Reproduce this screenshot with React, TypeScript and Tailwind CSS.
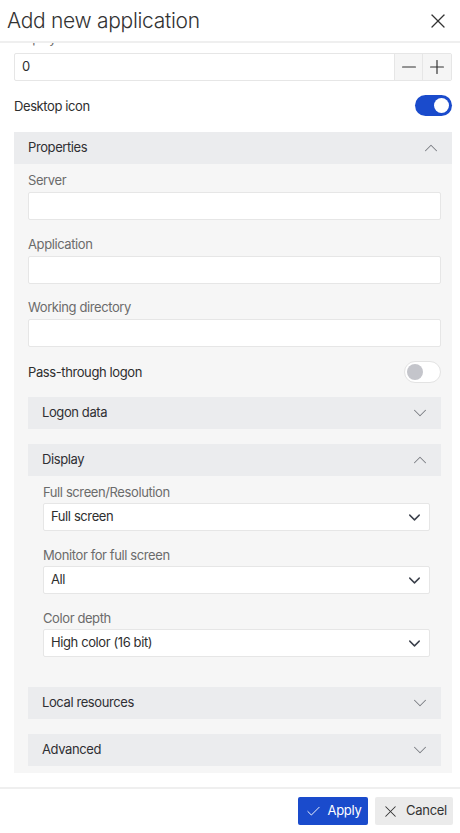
import { useState } from "react"
import { Check, ChevronDown, ChevronUp, Minus, Plus, X } from "lucide-react"

function Toggle({ on }: { on: boolean }) {
  return on ? (
    <div className="w-[37px] h-[21px] rounded-full bg-[#1a4bcc] flex items-center justify-end pr-[3px]">
      <div className="w-[15px] h-[15px] rounded-full bg-white" />
    </div>
  ) : (
    <div className="w-[37px] h-[22px] rounded-full bg-white border border-[#e3e3e3] flex items-center pl-[2px]">
      <div className="w-[16px] h-[16px] rounded-full bg-[#c4c5cb]" />
    </div>
  )
}

function TextField({ label, className = "" }: { label: string; className?: string }) {
  return (
    <div className={className}>
      <div className="h-4 leading-4 text-[13px] tracking-[-0.4px] text-[#6b6b6b]">{label}</div>
      <div className="mt-1 h-[28px] bg-white border border-[#e6e6e6] rounded-[2px]" />
    </div>
  )
}

function SelectField({ label, value, className = "" }: { label: string; value: string; className?: string }) {
  return (
    <div className={className}>
      <div className="h-4 leading-4 text-[13px] tracking-[-0.4px] text-[#6b6b6b]">{label}</div>
      <div className="mt-[3px] h-[28px] bg-white border border-[#e6e6e6] rounded-[2px] flex items-center pl-[7px] pr-[5px]">
        <span className="flex-1 text-[13px] tracking-[-0.4px] text-[#2e2e2e]">{value}</span>
        <ChevronDown className="w-[19px] h-[19px] text-[#3a3f4a]" strokeWidth={1.8} />
      </div>
    </div>
  )
}

function SectionHeader({ title, open }: { title: string; open?: boolean }) {
  return (
    <div className="h-[32px] bg-[#ebecee] flex items-center pl-[14px] pr-[10px]">
      <span className="flex-1 text-[13px] tracking-[-0.4px] text-[#2f2f33]">{title}</span>
      {open ? (
        <ChevronUp className="w-[22px] h-[22px] text-[#7a7c82]" strokeWidth={1.1} />
      ) : (
        <ChevronDown className="w-[22px] h-[22px] text-[#7a7c82]" strokeWidth={1.1} />
      )}
    </div>
  )
}

export default function App() {
  const [order] = useState(0)

  return (
    <div
      className="w-[460px] h-[833px] bg-white flex flex-col overflow-hidden text-[#2e2e2e]"
      style={{ fontFamily: "Inter, 'Liberation Sans', sans-serif" }}
    >
      {/* dialog header */}
      <div className="h-[43px] shrink-0 flex items-center pl-[7px] pr-[10px] border-b-2 border-[#efefef]">
        <h1 className="flex-1 text-[21px] font-light text-[#333] tracking-[-0.3px]">Add new application</h1>
        <X className="w-[24px] h-[24px] text-[#333]" strokeWidth={1.3} />
      </div>

      {/* scrollable form body */}
      <div className="flex-1 overflow-hidden pl-[14px] pr-[8px]">
        {/* label of the stepper, scrolled almost out of view */}
        <div className="h-[3px] overflow-hidden">
          <div className="-mt-[13px] h-4 leading-4 text-[13px] tracking-[-0.4px] text-[#6b6b6b]">Display order</div>
        </div>
        <div className="mt-[7px] h-[28px] flex border border-[#e6e6e6] rounded-[2px]">
          <div className="flex-1 flex items-center pl-[7px] text-[13px]">{order}</div>
          <div className="w-[28px] border-l border-[#e6e6e6] bg-[#f5f5f5] flex items-center justify-center">
            <Minus className="w-[22px] h-[22px] text-[#333]" strokeWidth={1.3} />
          </div>
          <div className="w-[29px] border-l border-[#e6e6e6] bg-[#f5f5f5] flex items-center justify-center">
            <Plus className="w-[22px] h-[22px] text-[#333]" strokeWidth={1.3} />
          </div>
        </div>

        <div className="mt-[14px] h-[21px] flex items-center">
          <span className="flex-1 leading-[21px] text-[13px] tracking-[-0.4px] text-[#2e2e2e] translate-y-[1px]">Desktop icon</span>
          <Toggle on />
        </div>

        {/* Properties */}
        <div className="mt-[16px] bg-[#f6f6f6]">
          <SectionHeader title="Properties" open />
          <div className="pl-[14px] pr-[11px] pt-2 pb-[7px]">
            <TextField label="Server" />
            <TextField label="Application" className="mt-4" />
            <TextField label="Working directory" className="mt-[15px]" />

            <div className="mt-[14px] h-[22px] flex items-center">
              <span className="flex-1 leading-[22px] text-[13px] tracking-[-0.4px] text-[#2e2e2e]">Pass-through logon</span>
              <Toggle on={false} />
            </div>

            <div className="mt-[14px]">
              <SectionHeader title="Logon data" />
            </div>

            <div className="mt-[15px]">
              <SectionHeader title="Display" open />
              <div className="pl-[15px] pr-[11px] pt-2 pb-[15px]">
                <SelectField label="Full screen/Resolution" value="Full screen" />
                <SelectField label="Monitor for full screen" value="All" className="mt-[16px]" />
                <SelectField label="Color depth" value="High color (16 bit)" className="mt-[16px]" />
              </div>
            </div>

            <div className="mt-[15px]">
              <SectionHeader title="Local resources" />
            </div>
            <div className="mt-[15px]">
              <SectionHeader title="Advanced" />
            </div>
          </div>
        </div>
      </div>

      {/* footer actions */}
      <div className="h-[46px] shrink-0 border-t-2 border-[#efefef] flex items-center justify-end gap-[7px] pr-[7px]">
        <button className="h-[28px] w-[70px] rounded-[2px] bg-[#1a4bcc] text-white text-[13px] tracking-[-0.3px] flex items-center justify-center gap-[6px]">
          <Check className="w-[17px] h-[17px]" strokeWidth={1.3} />
          Apply
        </button>
        <button className="h-[28px] w-[78px] rounded-[2px] bg-[#ebebeb] text-[#333] text-[13px] tracking-[-0.3px] flex items-center justify-center gap-[6px]">
          <X className="w-[19px] h-[19px]" strokeWidth={1.3} />
          Cancel
        </button>
      </div>
    </div>
  )
}
